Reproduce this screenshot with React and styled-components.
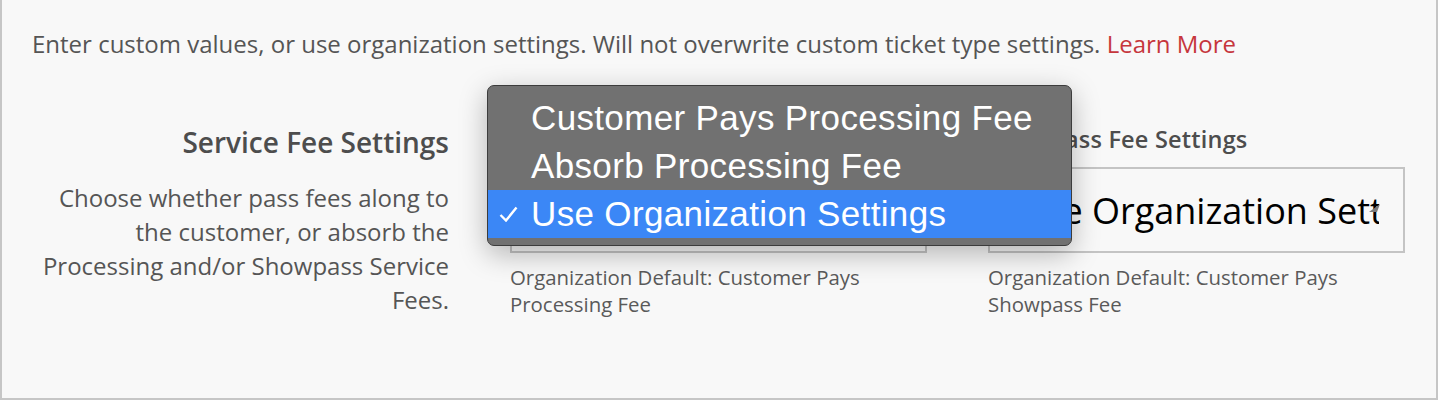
import React from "react";
import styled, { createGlobalStyle } from "styled-components";

const GlobalStyle = createGlobalStyle`
  body {
    margin: 0;
    background: #ffffff;
    font-family: "Open Sans", "Noto Sans", sans-serif;
  }
`;

const App = () => {
  return (
    <>
      <GlobalStyle />
      <Panel>
        <Intro>
          Enter custom values, or use organization settings. Will not overwrite
          custom ticket type settings. <LearnMore href="#">Learn More</LearnMore>
        </Intro>
        <Grid>
          <LabelCol>
            <Heading>Service Fee Settings</Heading>
            <Description>
              Choose whether pass fees along to the customer, or absorb the
              Processing and/or Showpass Service Fees.
            </Description>
          </LabelCol>

          <FieldCol>
            <FieldLabel>Processing Fee Settings</FieldLabel>
            <SelectBox>
              <SelectText>Use Organization Settings</SelectText>
              <Arrow />
            </SelectBox>
            <Hint>Organization Default: Customer Pays Processing Fee</Hint>

            <Dropdown>
              <Option>Customer Pays Processing Fee</Option>
              <Option>Absorb Processing Fee</Option>
              <Option selected>
                <Check viewBox="0 0 19 16">
                  <polyline points="1.5,9 7,14.5 17.5,1.5" />
                </Check>
                Use Organization Settings
              </Option>
            </Dropdown>
          </FieldCol>

          <FieldCol>
            <FieldLabel>Showpass Fee Settings</FieldLabel>
            <SelectBox>
              <SelectText>Use Organization Settings</SelectText>
              <Arrow />
            </SelectBox>
            <Hint>Organization Default: Customer Pays Showpass Fee</Hint>
          </FieldCol>
        </Grid>
      </Panel>
    </>
  );
};

const Arrow = () => (
  <ArrowIcon viewBox="0 0 11 8">
    <polygon points="0,8 11,0 8,8" />
  </ArrowIcon>
);

const Panel = styled.div`
  box-sizing: border-box;
  width: 1438px;
  height: 400px;
  background: #f8f8f8;
  border: 2px solid #c6c6c6;
  border-top: none;
  padding: 27px 30px 0 30px;
`;

const Intro = styled.p`
  margin: 0;
  font-size: 24px;
  line-height: 33px;
  color: #555555;
`;

const LearnMore = styled.a`
  color: #c6363c;
  text-decoration: none;
`;

const Grid = styled.div`
  display: grid;
  grid-template-columns: repeat(3, 417px);
  column-gap: 61px;
  margin-top: 64px;
`;

const LabelCol = styled.div`
  text-align: right;
`;

const Heading = styled.h3`
  margin: 2px 0 0;
  font-size: 28px;
  line-height: 32px;
  font-weight: 600;
  color: #4d4d4d;
`;

const Description = styled.p`
  margin: 23px 0 0;
  font-size: 24px;
  line-height: 34px;
  color: #555555;
`;

const FieldCol = styled.div`
  position: relative;
  display: flex;
  flex-direction: column;
`;

const FieldLabel = styled.label`
  font-size: 23.5px;
  line-height: 31px;
  letter-spacing: 0.2px;
  font-weight: 600;
  color: #4d4d4d;
`;

const SelectBox = styled.div`
  position: relative;
  box-sizing: border-box;
  height: 86px;
  margin-top: 12px;
  border: 2px solid #c4c4c4;
  display: flex;
  align-items: center;
  padding: 0 24px 0 29px;
`;

const SelectText = styled.span`
  flex: 1;
  overflow: hidden;
  white-space: nowrap;
  font-size: 36px;
  color: #000000;
`;

const ArrowIcon = styled.svg`
  position: absolute;
  right: 23px;
  top: 35px;
  width: 11px;
  height: 8px;
  fill: #7a7a7a;
`;

const Hint = styled.p`
  margin: 11px 0 0;
  font-size: 20.4px;
  line-height: 27px;
  color: #5a5a5a;
`;

const Dropdown = styled.div`
  position: absolute;
  z-index: 2;
  left: -23px;
  top: -39px;
  box-sizing: border-box;
  width: 585px;
  height: 161px;
  padding: 8px 0;
  background: #717171;
  border: 1px solid #3c3c3c;
  border-radius: 7px;
  box-shadow: 0 8px 28px rgba(0, 0, 0, 0.28);
  overflow: hidden;
`;

const Option = styled.div`
  position: relative;
  height: 48px;
  display: flex;
  align-items: center;
  padding-left: 43px;
  font-family: "Liberation Sans", Arial, sans-serif;
  font-size: 35px;
  letter-spacing: 0.35px;
  color: #ffffff;
  background: ${(props) => (props.selected ? "#3b87f6" : "transparent")};
`;

const Check = styled.svg`
  position: absolute;
  left: 11px;
  top: 16px;
  width: 19px;
  height: 16px;
  fill: none;
  stroke: #ffffff;
  stroke-width: 2.4;
`;

export default App;
